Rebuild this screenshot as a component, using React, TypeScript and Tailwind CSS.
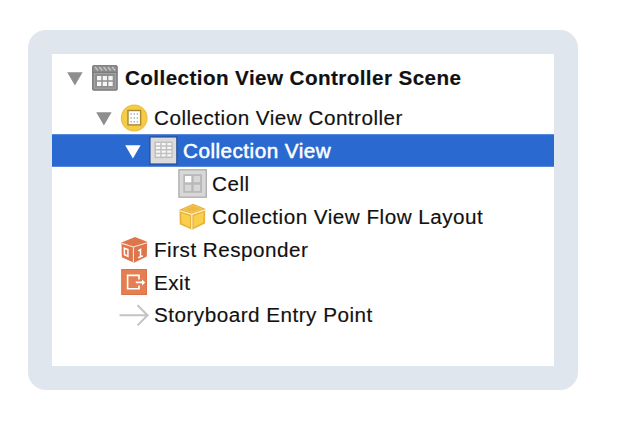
import type { ReactNode } from "react";

const Arrow = ({ color }: { color: string }) => (
  <svg width="18" height="18" viewBox="0 0 18 18" className="shrink-0">
    <path d="M1.2 3.2H16.6L8.9 16.4Z" fill={color} />
  </svg>
);

const SceneIcon = () => (
  <svg width="28" height="28" viewBox="0 0 28 28">
    <rect x="1.2" y="1.2" width="25.4" height="25.4" rx="1.5" fill="#8f8f8f" />
    <rect x="1.7" y="1.7" width="24.4" height="24.4" rx="1" fill="none" stroke="#787878" />
    <path d="M4 3l3 3.5M8.3 3l3 3.5M12.6 3l3 3.5M16.9 3l3 3.5M21.2 3l3 3.5" stroke="#c6c6c6" strokeWidth="1.3" />
    <path d="M2 8.3H26" stroke="#747474" />
    <rect x="3.5" y="9.4" width="20.8" height="14.8" fill="none" stroke="#a4a4a4" />
    <path d="M6 12h4.3v4.2H6zM11.7 12H16v4.2h-4.3zM17.4 12h4.3v4.2h-4.3zM6 17.8h4.3V22H6zM11.7 17.8H16V22h-4.3zM17.4 17.8h4.3V22h-4.3z" fill="#f5f5f5" />
  </svg>
);

const ControllerIcon = () => (
  <svg width="28" height="28" viewBox="0 0 28 28">
    <circle cx="14.2" cy="14" r="12.8" fill="#f5cc47" stroke="#edbd43" strokeWidth="1.2" />
    <rect x="8" y="6.5" width="12.6" height="14.4" fill="#fff" stroke="#a68930" strokeWidth="1.4" />
    <path d="M11.2 9.3v10M14.3 9.3v10M17.4 9.3v10" stroke="#b0b0b0" strokeWidth="1.4" strokeDasharray="1.5 2.4" />
  </svg>
);

const CollectionIcon = () => (
  <svg width="29" height="29" viewBox="0 0 29 29" className="shrink-0">
    <rect x="1" y="1" width="26.8" height="27" fill="#dcdcdc" stroke="#26478b" strokeWidth="1.1" />
    <rect x="5.4" y="5.4" width="18.4" height="16.8" rx="1" fill="#c0c0c0" />
    <path d="M7 8.2h15.5M7 11.9h15.5M7 15.6h15.5M7 19.3h15.5" stroke="#f6f6f6" strokeWidth="2.2" strokeDasharray="4.2 1.4" />
  </svg>
);

const CellIcon = () => (
  <svg width="29" height="29" viewBox="0 0 29 29" className="shrink-0">
    <rect x=".9" y=".8" width="27.4" height="27.4" fill="#d8d8d8" stroke="#b0b0b0" strokeWidth="1.4" />
    <rect x="5.3" y="5.2" width="18.8" height="18.6" fill="#b9b9b9" />
    <rect x="7" y="7" width="6.3" height="6.3" fill="#fff" />
    <path d="M15.7 7H22v6.3h-6.3zM7 15.7h6.3V22H7zM15.7 15.7H22V22h-6.3z" fill="#d7d7d7" />
  </svg>
);

const CubeIcon = () => (
  <svg width="28" height="28" viewBox="0 0 28 28" strokeLinejoin="round">
    <path d="M1.5 6.8L15 .8L27.3 5.8L27 20.4L14 26.7L1.7 21.3Z" fill="#e9b23c" />
    <path d="M5 6.6L15 2.5L23.8 6L14 9.2Z" fill="#edb93e" stroke="#f4cb5e" strokeWidth=".8" />
    <path d="M3.3 9.9L12.1 13V24.2L3.5 20.2ZM15.6 13L25.5 9.3L25.2 19.6L15.6 24.2Z" fill="#f8d04c" />
    <path d="M1.8 7.7L13.8 11.4L27 6.9M13.8 11.4V26.5" fill="none" stroke="#fff3cf" strokeWidth="1.2" />
  </svg>
);

const ResponderIcon = () => (
  <svg width="28" height="28" viewBox="0 0 28 28">
    <path d="M1.5 6.5L15 1L27.2 5.8L26.8 20.6L14 26.8L1.8 21.2Z" fill="#df764b" />
    <path d="M1.8 7.4L13.4 11L27 6.7M13.4 11V26.6" fill="none" stroke="#fbe5dc" strokeWidth="1.1" />
    <path d="M4.3 12.2l3.6 1.3v6.8l-3.4-1.6z" fill="none" stroke="#fff" strokeWidth="1.5" />
    <path d="M18.2 15l2.3-1.6v7.4M18.2 21.8l4.6-1.9" fill="none" stroke="#fff" strokeWidth="1.5" />
  </svg>
);

const ExitIcon = () => (
  <svg width="28" height="28" viewBox="0 0 28 28">
    <rect x="1.7" y="1.5" width="24.8" height="25" fill="#e57f52" stroke="#dc7147" />
    <path d="M19 11.4V7.4H7.6V20.7H19V17.4M15.8 14.4H23" fill="none" stroke="#fff" strokeWidth="1.6" />
    <path d="M22 11.4L25.2 14.4L22 17.4Z" fill="#fff" />
  </svg>
);

const EntryIcon = () => (
  <svg width="30" height="28" viewBox="0 0 30 28" className="-ml-px shrink-0">
    <path d="M.5 14.3H28.5M18.5 4.2L28.6 14.3L18.5 24.4" fill="none" stroke="#c3c3c3" strokeWidth="2" />
  </svg>
);

const Row = ({ arrow, icon, children, className }: { arrow?: string; icon: ReactNode; children: ReactNode; className: string }) => (
  <div className={`flex shrink-0 items-center whitespace-nowrap ${className}`}>
    <div className="flex w-[25px] shrink-0 items-center">{arrow && <Arrow color={arrow} />}</div>
    <div className="flex h-7 w-[34px] shrink-0 items-center">{icon}</div>
    <span className="origin-left scale-x-106">{children}</span>
  </div>
);

export default function App() {
  return (
    <div className="h-[424px] w-[624px] bg-white pt-[30px] pl-7">
      <div className="h-[360px] w-[550px] rounded-[18px] bg-[#e0e6ee] p-6">
        <div className="flex h-[312px] flex-col bg-white pt-2 font-['Liberation_Sans',sans-serif] text-[19.5px] leading-[33px] tracking-[0.46px] text-[#111] [-webkit-text-stroke:0.15px_currentColor]">
          <Row arrow="#8e8e8e" icon={<SceneIcon />} className="h-8 pl-[14px] font-bold tracking-[0.38px]">Collection View Controller Scene</Row>
          <Row arrow="#8e8e8e" icon={<ControllerIcon />} className="mt-[7px] h-[33px] pl-[43px] [&>span]:pt-0.5">Collection View Controller</Row>
          <Row arrow="#ffffff" icon={<CollectionIcon />} className="h-[33px] border-y border-[#5889dc] bg-[#2969d0] pl-[72px] text-white [-webkit-text-stroke:0.5px_white] [&>span]:pt-0.5">Collection View</Row>
          <Row icon={<CellIcon />} className="h-[33px] pl-[101px] [&>span]:pt-0.5">Cell</Row>
          <Row icon={<CubeIcon />} className="h-[33px] pl-[101px] [&>span]:pt-0.5">Collection View Flow Layout</Row>
          <Row icon={<ResponderIcon />} className="h-[33px] pl-[43px] [&>span]:pt-0.5">First Responder</Row>
          <Row icon={<ExitIcon />} className="h-[32px] pl-[43px] [&>span]:pt-0.5">Exit</Row>
          <Row icon={<EntryIcon />} className="h-[33px] pl-[43px] [&>span]:pt-0.5">Storyboard Entry Point</Row>
        </div>
      </div>
    </div>
  );
}
